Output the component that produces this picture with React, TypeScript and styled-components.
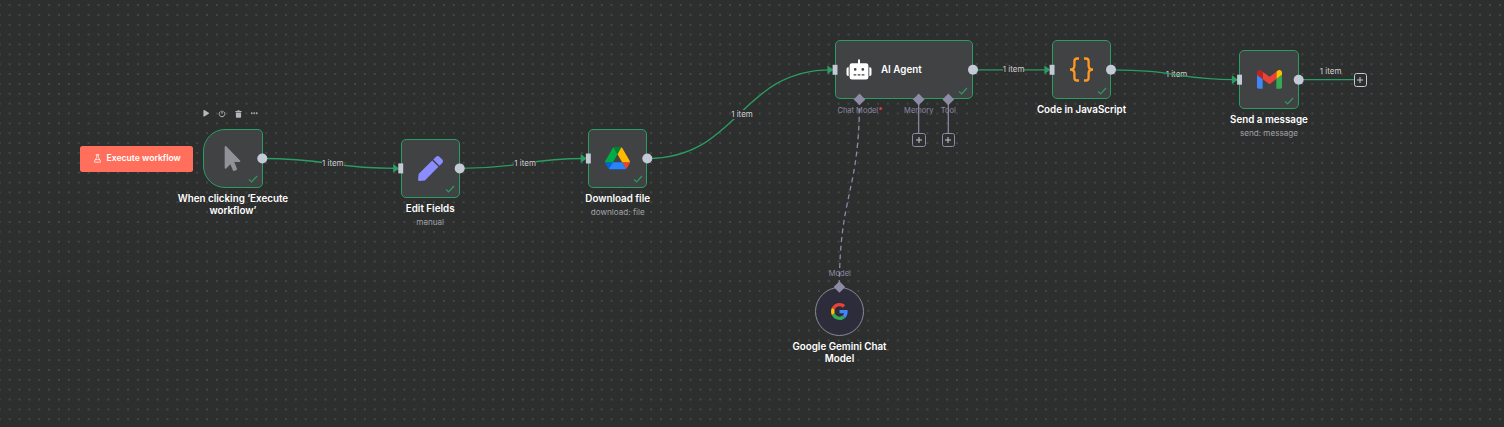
import React, { ReactNode } from 'react';
import styled, { createGlobalStyle, css } from 'styled-components';
import { FaMousePointer, FaPen, FaPlay } from 'react-icons/fa';
import { Ellipsis, FlaskConical } from 'lucide-react';

const green = '#2a9d63';
const grey = '#c3c9d5';
const violet = '#8d8ba5';
const canvas = '#2d2e2e';

const GlobalStyle = createGlobalStyle`
  body { margin: 0; background: ${canvas}; font-family: Inter, sans-serif; }
`;

const Canvas = styled.main`
  position: relative;
  width: 1504px;
  height: 427px;
  overflow: hidden;
  background: ${canvas};
`;

const Layer = styled.svg`
  position: absolute;
  inset: 0;
  width: 100%;
  height: 100%;
  pointer-events: none;
`;

const Placed = styled.div<{ $x: number; $y: number }>`
  position: absolute;
  left: ${p => p.$x}px;
  top: ${p => p.$y}px;
  width: 0;
  display: flex;
  flex-direction: column;
  align-items: center;
`;

const Box = styled.div<{ $shape?: 'trigger' | 'circle' | 'agent' }>`
  flex: none;
  width: 59.4px;
  height: 59.4px;
  box-sizing: border-box;
  display: grid;
  grid-template: 100% / 100%;
  place-items: center;
  background: #414244;
  border: 1.2px solid ${green};
  border-radius: 5px;
  > * { grid-area: 1 / 1; }
  ${p => p.$shape === 'trigger' && css`border-radius: 22px 5px 5px 22px;`}
  ${p => p.$shape === 'agent' && css`width: 138px;`}
  ${p => p.$shape === 'circle' && css`
    width: 49.4px;
    height: 49.4px;
    border-radius: 50%;
    background: #2c2c3b;
    border-color: #8b8a94;
  `}
`;

const AgentContent = styled.div`
  justify-self: start;
  display: flex;
  align-items: center;
  gap: 8.8px;
  padding-left: 10.2px;
`;

const AgentName = styled.span`
  color: #fff;
  font-size: 9.8px;
  font-weight: 600;
`;

const CheckIcon = styled.svg`
  place-self: end;
  width: 10px;
  height: 8px;
  margin: 0 3.6px 3.8px 0;
`;

const Caption = styled.div`
  width: 120px;
  margin-top: 5px;
  display: flex;
  flex-direction: column;
  align-items: center;
  text-align: center;
`;

const Title = styled.span`
  color: #fff;
  font-size: 9.8px;
  font-weight: 600;
  line-height: 12px;
`;

const Subtitle = styled.span`
  margin-top: 1.9px;
  color: #a0a1a6;
  font-size: 8.15px;
  line-height: 10px;
`;

const EdgeText = styled.span<{ $plain?: boolean }>`
  color: #d0d0d2;
  background: ${p => (p.$plain ? 'transparent' : canvas)};
  font-size: 8px;
  line-height: 9px;
  white-space: nowrap;
`;

const PortText = styled.span`
  color: ${violet};
  font-size: 7.5px;
  line-height: 9px;
  white-space: nowrap;
`;

const Required = styled.span`
  color: #f04a4a;
  font-weight: 700;
`;

const RunButton = styled.button`
  flex: none;
  width: 113px;
  height: 25.6px;
  display: flex;
  align-items: center;
  justify-content: center;
  gap: 4.5px;
  padding: 0 0 1.6px;
  box-sizing: border-box;
  border: 0;
  border-radius: 2.5px;
  background: #ff6f5c;
  color: #fff;
  font: 600 8.65px Inter, sans-serif;
  white-space: nowrap;
`;

const Toolbar = styled.div`
  display: grid;
  grid-template-columns: repeat(4, 16px);
  place-items: center;
  height: 9px;
  color: #b5b6bd;
`;

const PlusBox = styled.span<{ $bright?: boolean }>`
  flex: none;
  width: 13.6px;
  height: 13.6px;
  box-sizing: border-box;
  display: flex;
  align-items: center;
  justify-content: center;
  border: 1.2px solid ${p => (p.$bright ? grey : violet)};
  border-radius: 2.6px;
  background: ${canvas};
  color: ${grey};
`;

const SubPort = styled.div`
  display: flex;
  flex-direction: column;
  align-items: center;
  gap: 18.3px;
`;

const Check = () => (
  <CheckIcon viewBox="0 0 10 8">
    <path d="M1 4.4 3.6 7 9 1" fill="none" stroke={green} strokeWidth="1.2" />
  </CheckIcon>
);

const Plus = ({ bright }: { bright?: boolean }) => (
  <PlusBox $bright={bright}>
    <svg width="6" height="6" viewBox="0 0 6 6">
      <path d="M3 0v6M0 3h6" stroke="currentColor" strokeWidth="1" />
    </svg>
  </PlusBox>
);

type StepProps = {
  x: number;
  y: number;
  shape?: 'trigger' | 'circle';
  icon: ReactNode;
  title: string;
  subtitle?: string;
};

const Step = ({ x, y, shape, icon, title, subtitle }: StepProps) => (
  <Placed $x={x} $y={y}>
    <Box $shape={shape}>
      {icon}
      {shape !== 'circle' && <Check />}
    </Box>
    <Caption>
      <Title>{title}</Title>
      {subtitle && <Subtitle>{subtitle}</Subtitle>}
    </Caption>
  </Placed>
);

const RobotIcon = () => (
  <svg width="26" height="21" viewBox="0 0 26 21" fill="#fff">
    <rect x="12" y="0.3" width="2" height="5" rx="1" />
    <path fillRule="evenodd" d="M6 4.2h14a2.4 2.4 0 0 1 2.4 2.4v11.6a2.4 2.4 0 0 1-2.4 2.4H6a2.4 2.4 0 0 1-2.4-2.4V6.6A2.4 2.4 0 0 1 6 4.2zM9.2 9.1a1.35 1.35 0 1 0 0 2.7 1.35 1.35 0 0 0 0-2.7zM16.8 9.1a1.35 1.35 0 1 0 0 2.7 1.35 1.35 0 0 0 0-2.7zM7.6 15.3v1.3h2.7v-1.3zM11.7 15.3v1.3h2.7v-1.3zM15.7 15.3v1.3h2.7v-1.3z" />
    <path d="M2.7 8.3v8.6h-.6A1.6 1.6 0 0 1 .5 15.3V9.9a1.6 1.6 0 0 1 1.6-1.6zM23.3 8.3v8.6h.6a1.6 1.6 0 0 0 1.6-1.6V9.9a1.6 1.6 0 0 0-1.6-1.6z" />
  </svg>
);

const PowerIcon = () => (
  <svg width="8" height="8" viewBox="0 0 8 8" fill="none" stroke="currentColor" strokeWidth="1">
    <path d="M2.6 1.5a2.8 2.8 0 1 0 2.8 0M4 .6v3.2" />
  </svg>
);

const TrashIcon = () => (
  <svg width="7" height="8" viewBox="0 0 7 8" fill="currentColor">
    <path d="M.4 1H2.3L2.7.3H4.3L4.7 1H6.600V2H.4zM.9 2.4H6.1V7a.8.8 0 0 1-.8.8H1.7A.8.8 0 0 1 .9 7z" />
  </svg>
);

const DriveIcon = () => (
  <svg width="25" height="22.3" viewBox="0 0 87.3 78">
    <path fill="#0066da" d="m6.6 66.85 3.85 6.65c.8 1.4 1.95 2.5 3.3 3.3l13.75-23.8h-27.5c0 1.55.4 3.1 1.2 4.5z" />
    <path fill="#00ac47" d="m43.65 25-13.75-23.8c-1.35.8-2.5 1.9-3.3 3.3l-25.4 44a9.06 9.06 0 0 0-1.2 4.5h27.5z" />
    <path fill="#ea4335" d="m73.55 76.8c1.35-.8 2.5-1.9 3.3-3.3l1.6-2.75 7.65-13.25c.8-1.4 1.2-2.95 1.2-4.5h-27.5l5.85 11.5z" />
    <path fill="#00832d" d="m43.65 25 13.75-23.8c-1.35-.8-2.9-1.2-4.5-1.2h-18.5c-1.6 0-3.15.45-4.5 1.2z" />
    <path fill="#2684fc" d="m59.8 53h-32.3l-13.75 23.8c1.35.8 2.9 1.2 4.5 1.2h50.8c1.6 0 3.15-.45 4.5-1.2z" />
    <path fill="#ffba00" d="m73.4 26.5-12.7-22c-.8-1.4-1.95-2.5-3.3-3.3l-13.75 23.8 16.15 28h27.45c0-1.55-.4-3.1-1.2-4.5z" />
  </svg>
);

const GmailIcon = () => (
  <svg width="25" height="18.8" viewBox="52 42 88 66">
    <path fill="#4285f4" d="M58 108h14V74L52 59v43c0 3.32 2.69 6 6 6" />
    <path fill="#34a853" d="M120 108h14c3.32 0 6-2.69 6-6V59l-20 15" />
    <path fill="#fbbc04" d="M120 48v26l20-15v-8c0-7.42-8.47-11.65-14.4-7.2" />
    <path fill="#ea4335" d="M72 74V48l24 18 24-18v26L96 92" />
    <path fill="#c5221f" d="M52 51v8l20 15V48l-5.6-4.2c-5.94-4.45-14.4-.22-14.4 7.2" />
  </svg>
);

const GoogleIcon = () => (
  <svg width="17" height="17" viewBox="0 0 48 48">
    <path fill="#ea4335" d="M24 9.5c3.54 0 6.71 1.22 9.21 3.6l6.85-6.85C35.9 2.38 30.47 0 24 0 14.62 0 6.51 5.38 2.56 13.22l7.98 6.19C12.43 13.72 17.74 9.5 24 9.5z" />
    <path fill="#4285f4" d="M46.98 24.55c0-1.57-.15-3.09-.38-4.55H24v9.02h12.94c-.58 2.96-2.26 5.48-4.78 7.18l7.73 6c4.51-4.18 7.09-10.36 7.09-17.65z" />
    <path fill="#fbbc05" d="M10.53 28.59c-.48-1.45-.76-2.99-.76-4.59s.27-3.14.76-4.59l-7.98-6.19C.92 16.46 0 20.12 0 24c0 3.88.92 7.54 2.56 10.78l7.97-6.19z" />
    <path fill="#34a853" d="M24 48c6.48 0 11.93-2.13 15.89-5.81l-7.73-6c-2.15 1.45-4.92 2.3-8.16 2.3-6.26 0-11.57-4.22-13.47-9.91l-7.98 6.19C6.51 42.62 14.62 48 24 48z" />
  </svg>
);

const BracesIcon = () => (
  <svg width="25" height="25" viewBox="0 0 25 25" fill="none" stroke="#ff9922" strokeWidth="2.3">
    <path d="M10 1.5H8.2Q5.4 1.5 5.4 4.3V8.8Q5.4 12.5 1 12.5Q5.4 12.5 5.4 16.2V20.7Q5.4 23.5 8.2 23.5H10" />
    <path d="M15 1.5h1.8Q19.6 1.5 19.6 4.3V8.8Q19.6 12.5 24 12.5Q19.6 12.5 19.6 16.2V20.7Q19.6 23.5 16.8 23.5H15" />
  </svg>
);

const edges = [
  'M262.3 158.5C330 158.5 330 168.4 396 168.4',
  'M460 168.4C524 168.4 524 158.5 584 158.5',
  'M647.3 158.5C739 158.5 739 69.8 831 69.8',
  'M973 69.8H1048',
  'M1298.7 79.7H1354',
];

const steps: StepProps[] = [
  { x: 430.2, y: 138.7, icon: <FaPen size={25} color="#8b8cff" />, title: 'Edit Fields', subtitle: 'manual' },
  { x: 617.7, y: 128.8, icon: <DriveIcon />, title: 'Download file', subtitle: 'download: file' },
  { x: 1081.5, y: 40.1, icon: <BracesIcon />, title: 'Code in JavaScript' },
  { x: 1269, y: 50, icon: <GmailIcon />, title: 'Send a message', subtitle: 'send: message' },
  { x: 839.5, y: 286.7, shape: 'circle', icon: <GoogleIcon />, title: 'Google Gemini Chat Model' },
];

const edgeLabels = [
  { x: 332.8, y: 158.5 },
  { x: 525.2, y: 158.5 },
  { x: 742, y: 109.5 },
  { x: 1013.6, y: 64.6 },
  { x: 1176.5, y: 69.5 },
  { x: 1330.6, y: 66.5, plain: true },
];

const outputs = [[262.3, 158.5], [459.7, 168.4], [647.3, 158.5], [973, 69.8], [1111, 69.8], [1298.7, 79.7]];
const inputs = [[400.7, 168.4], [588.3, 158.5], [835, 69.8], [1052, 69.8], [1239.5, 79.7]];
const diamonds = [[859.5, 99.4], [918.7, 99.4], [948.3, 99.4], [839.4, 287]];

export default function App() {
  return (
    <>
      <GlobalStyle />
      <Canvas>
        <Layer>
          <defs>
            <pattern id="grid" x="4.7" y="0.1" width="9.869" height="9.862" patternUnits="userSpaceOnUse">
              <circle cx="4.93" cy="4.93" r="0.62" fill="#737474" />
            </pattern>
          </defs>
          <rect width="1504" height="427" fill="url(#grid)" />
          <g fill="none" stroke={green} strokeWidth="1.3">
            {edges.map(d => <path key={d} d={d} />)}
          </g>
          <path d="M859.5 99.4C859.5 193 839.4 193 839.4 287" fill="none" stroke={violet} strokeWidth="1.3" strokeDasharray="5 3.7" />
          <path d="M918.7 99V134M948.3 99V134" stroke={violet} strokeWidth="1.2" />
        </Layer>

        <Placed $x={230.2} $y={109}>
          <Toolbar>
            <FaPlay size={6.5} />
            <PowerIcon />
            <TrashIcon />
            <Ellipsis size={8.5} strokeWidth={3} />
          </Toolbar>
        </Placed>
        <Placed $x={136.9} $y={146}>
          <RunButton><FlaskConical size={9} strokeWidth={2} />Execute workflow</RunButton>
        </Placed>
        <Step x={232.9} y={128.8} shape="trigger" icon={<FaMousePointer size={25} color="#909298" />} title="When clicking ‘Execute workflow’" />
        {steps.map(s => <Step key={s.title} {...s} />)}

        <Placed $x={904} $y={40.1}>
          <Box $shape="agent">
            <AgentContent><RobotIcon /><AgentName>AI Agent</AgentName></AgentContent>
            <Check />
          </Box>
        </Placed>
        <Placed $x={859.9} $y={106.1}><PortText>Chat Model<Required>*</Required></PortText></Placed>
        <Placed $x={918.8} $y={106.1}><SubPort><PortText>Memory</PortText><Plus /></SubPort></Placed>
        <Placed $x={948.4} $y={106.1}><SubPort><PortText>Tool</PortText><Plus /></SubPort></Placed>
        <Placed $x={839.8} $y={269}><PortText>Model</PortText></Placed>
        <Placed $x={1360.4} $y={73}><Plus bright /></Placed>

        {edgeLabels.map(l => (
          <Placed key={l.x} $x={l.x} $y={l.y}><EdgeText $plain={l.plain}>1 item</EdgeText></Placed>
        ))}

        <Layer>
          <path d="M1111 69.8C1176 69.8 1176 79.7 1235 79.7" fill="none" stroke={green} strokeWidth="1.3" />
          {inputs.map(([x, y]) => (
            <g key={x}>
              <path d={`M${x - 7.6} ${y - 4.4}L${x - 1.5} ${y}L${x - 7.6} ${y + 4.4}Z`} fill={green} />
              <rect x={x - 2.4} y={y - 5} width="4.9" height="10" fill={grey} />
            </g>
          ))}
          {outputs.map(([x, y]) => <circle key={x} cx={x} cy={y} r="5" fill={grey} />)}
          {diamonds.map(([x, y]) => (
            <path key={x} d={`M${x} ${y - 5.8}L${x + 5.8} ${y}L${x} ${y + 5.8}L${x - 5.8} ${y}Z`} fill={violet} />
          ))}
        </Layer>
      </Canvas>
    </>
  );
}
